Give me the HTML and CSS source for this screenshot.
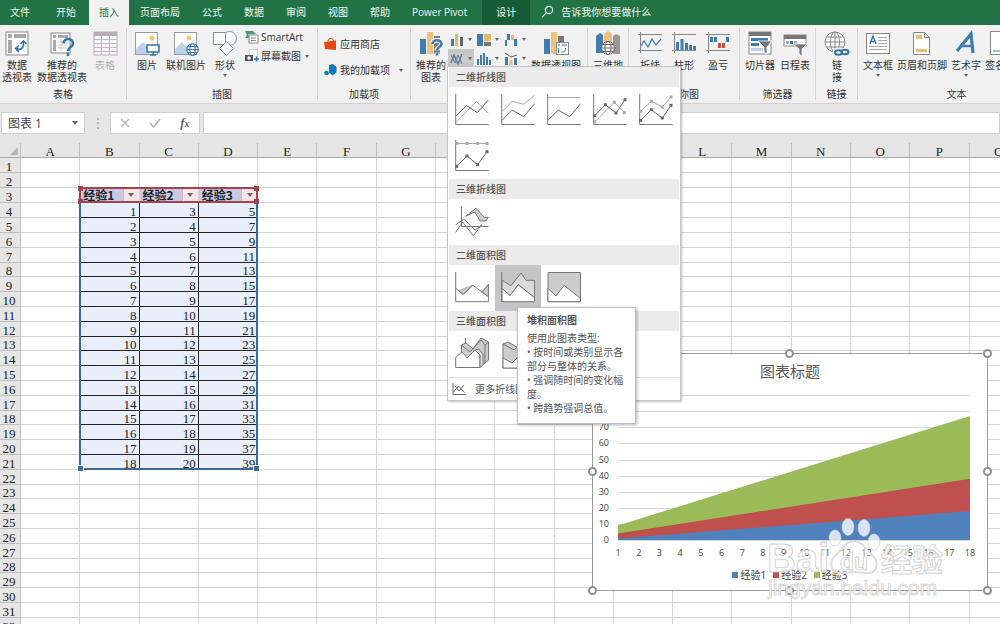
FILE: index.html
```html
<!DOCTYPE html>
<html lang="zh-CN">
<head>
<meta charset="utf-8">
<title>图表工作簿</title>
<link rel="stylesheet" href="styles.css">
</head>
<body>
<nav class="tabs">
  <button class="tab tab-file">文件</button>
  <button class="tab tab-home">开始</button>
  <button class="tab tab-active">插入</button>
  <button class="tab">页面布局</button>
  <button class="tab">公式</button>
  <button class="tab">数据</button>
  <button class="tab">审阅</button>
  <button class="tab">视图</button>
  <button class="tab">帮助</button>
  <button class="tab">Power Pivot</button>
  <button class="tab tab-context">设计</button>
  <button class="tell-me">
    <svg width="14" height="14" viewBox="0 0 14 14" fill="none" stroke="#e4f2e9" stroke-width="1.2"><circle cx="8" cy="5" r="3.6"/><path d="M5.4 7.6L1 12.4"/></svg>
    告诉我你想要做什么
  </button>
</nav>

<div class="ribbon">
  <section class="group g-tables">
    <div class="group-body">
      <button class="big">
        <svg class="ico" viewBox="0 0 26 26"><rect x="2" y="2" width="22" height="23" fill="#fff" stroke="#8a8a8a"/><path d="M4 4h4v4H4zM10 4h12v4H10zM4 10h4v13H4z" fill="#a9a9a9"/><path d="M12.500 18.500C17 21 20 18 19.500 12M16.500 14l3-3.200 3 3.200M15 15.500l-3.500 3 3.500 3.500" fill="none" stroke="#2e75a8" stroke-width="1.600"/></svg>
        <span>数据<br>透视表</span>
      </button>
      <button class="big">
        <svg class="ico" viewBox="0 0 26 26"><rect x="2" y="3" width="19" height="20" fill="#fff" stroke="#8a8a8a"/><path d="M4 5h3v3H4zM9 5h10v3H9zM4 10h3v11H4z" fill="#a9a9a9"/><path d="M9 12h9M9 15h9M9 18h9M12 9v12" stroke="#ccc"/><path d="M14.500 13.500c0-6 9.500-6 9.500 0 0 3.500-5 3.500-5 7.500M19 23v3" fill="none" stroke="#2e75a8" stroke-width="2.600"/></svg>
        <span>推荐的<br>数据透视表</span>
      </button>
      <button class="big" disabled>
        <svg class="ico" viewBox="0 0 26 26"><rect x="2" y="2" width="23" height="23" fill="#fbf6fb" stroke="#b9adb9"/><rect x="2" y="2" width="23" height="4" fill="#b9adb9"/><path d="M2 9.500h23M2 13.500h23M2 17.500h23M2 21.500h23M9.500 6v19M17.500 6v19" stroke="#c5b6c5"/></svg>
        <span>表格</span>
      </button>
    </div>
    <h2>表格</h2>
  </section>

  <section class="group g-pictures">
    <div class="group-body">
      <button class="big">
        <svg class="ico" viewBox="0 0 26 26"><rect x="1.500" y="2.500" width="22" height="22" fill="#fff" stroke="#9a9a9a"/><circle cx="18" cy="8" r="2.500" fill="#eec67c"/><path d="M2 19l7-7 6 7v5H2z" fill="#bfd3e8"/><rect x="13" y="15" width="12" height="7" fill="#fff" stroke="#2e75a8" stroke-width="1.500"/><path d="M16 25h6M19 22v3" stroke="#2e75a8" stroke-width="1.500"/></svg>
        <span>图片</span>
      </button>
      <button class="big">
        <svg class="ico" viewBox="0 0 26 26"><rect x="1.500" y="2.500" width="22" height="22" fill="#fff" stroke="#9a9a9a"/><circle cx="16" cy="8" r="2.500" fill="#eec67c"/><path d="M2 19l7-7 6 7v5H2z" fill="#bfd3e8"/><g fill="#fff" stroke="#3a7aa8" stroke-width="1.100"><circle cx="19.500" cy="19.500" r="5.800"/><ellipse cx="19.500" cy="19.500" rx="2.600" ry="5.800"/><path d="M13.700 19.500h11.600M14.500 16.500h10M14.500 22.500h10" fill="none"/></g></svg>
        <span>联机图片</span>
      </button>
      <button class="big">
        <svg class="ico" viewBox="0 0 26 26" fill="#fff" stroke="#6f97b8"><circle cx="17.500" cy="8.500" r="7"/><rect x="1.500" y="2.500" width="12" height="12"/><path d="M14.500 11.500l7 7-7 7-7-7z"/></svg>
        <span>形状</span><i class="caret"></i>
      </button>
      <div class="stack stack-top">
        <button class="row-btn"><svg width="16" height="14" viewBox="0 0 16 14"><path d="M1 1h8l3 3H4l2 4H1l2-3z" fill="#4f9478"/><rect x="5" y="5" width="9" height="8" fill="#fff" stroke="#888"/><path d="M7 8h5M7 10.500h5" stroke="#888"/></svg>SmartArt</button>
        <button class="row-btn"><svg width="16" height="14" viewBox="0 0 16 14"><rect x="5.500" y=".5" width="8" height="10" fill="#fff" stroke="#ccc"/><rect x="1" y="6" width="8" height="6" fill="#555"/><circle cx="5" cy="9" r="1.800" fill="#fff"/><path d="M10 10h5M12.500 7.500v5" stroke="#2e75a8" stroke-width="1.400"/></svg>屏幕截图<i class="caret"></i></button>
      </div>
    </div>
    <h2>插图</h2>
  </section>

  <section class="group g-addins">
    <div class="group-body">
      <div class="stack stack-wide">
        <button class="row-btn"><svg width="13" height="14" viewBox="0 0 13 14"><path d="M0 5l12-1.500V13L1 12z" fill="#e8450c"/><path d="M4 4.500C4 .5 9 .5 9.500 4" fill="none" stroke="#c8400e"/></svg>应用商店</button>
        <button class="row-btn"><svg width="13" height="14" viewBox="0 0 13 14"><path d="M5 2l4-1 3.500 3v5.500l-4 3-3.500-3z" fill="#0f78bf"/><circle cx="2.500" cy="10" r="2.300" fill="#0f78bf"/></svg>我的加载项<i class="caret caret-far"></i></button>
      </div>
    </div>
    <h2>加载项</h2>
  </section>

  <section class="group g-charts">
    <div class="group-body">
      <button class="big">
        <svg class="ico" viewBox="0 0 26 26"><path d="M2 9h6v15H2z" fill="#3f7cb0"/><path d="M9 2h6v22H9z" fill="#ecc27c"/><path d="M16 6h6v18h-6z" fill="#777"/><path d="M14.500 14c0-5 9-5 9 0 0 3.500-4.500 3-4.500 6.500M19 22.500v3" fill="none" stroke="#f1f1f1" stroke-width="5"/><path d="M14.500 14c0-5 9-5 9 0 0 3.500-4.500 3-4.500 6.500M19 22.500v3" fill="none" stroke="#3f7cb0" stroke-width="2.600"/></svg>
        <span>推荐的<br>图表</span>
      </button>
      <div class="minis">
        <button class="mini" aria-label="柱形图"><svg width="14" height="14" viewBox="0 0 14 14"><path d="M1 6h3v7H1z" fill="#3f7cb0"/><path d="M5 1h3v12H5z" fill="#e6b86e"/><path d="M10 4h3v9h-3z" fill="#666"/></svg><i class="caret"></i></button>
        <button class="mini" aria-label="层次结构图"><svg width="14" height="14" viewBox="0 0 14 14"><path d="M0 1h6v12H0z" fill="#3f7cb0"/><path d="M7 1h7v7H7z" fill="#e6b86e"/><path d="M7 9h7v4H7z" fill="#777"/></svg><i class="caret"></i></button>
        <button class="mini" aria-label="瀑布图"><svg width="14" height="14" viewBox="0 0 14 14"><path d="M1 7h2v6H1zM10 6h3v7h-3z" fill="#3f7cb0"/><path d="M3 1h3v6H3z" fill="#3f7cb0"/><path d="M7 2h3v5H7z" fill="#e6b86e"/></svg><i class="caret"></i></button>
        <div class="menu-anchor">
          <button class="mini mini-on" aria-label="折线图或面积图" aria-expanded="true"><svg width="14" height="14" viewBox="0 0 14 14" fill="none"><path d="M1 11L4 3l4 9 4-10" stroke="#3f7cb0" stroke-width="1.300"/><path d="M1 3l4 8 3-8 4 9" stroke="#777"/></svg><i class="caret"></i></button>
          <div class="menu">
            <h3>二维折线图</h3>
            <div class="tiles" id="line2d"></div>
            <h3>三维折线图</h3>
            <div class="tiles">
              <button class="tile" aria-label="三维折线图"><svg width="34" height="32" viewBox="0 0 34 32" fill="none" stroke="#777"><path d="M6.500 0v20.500h27"/><path d="M10.700 10.300L21 2.300l8.300 9h4L30.700 15h-5.400L19.500 6z" fill="#ccc"/><path d="M.7 18.700L9 13l11 11.300 6.700-5.600-8.400 11L7.700 16l-7 10.300" fill="none"/></svg></button>
            </div>
            <h3>二维面积图</h3>
            <div class="tiles">
              <button class="tile" aria-label="面积图"><svg width="34" height="32" viewBox="0 0 34 32" stroke="#777" fill="none"><path d="M3.700 18.700L10 16.300l7.300-3L8 22z M26.700 20.300l6.600-8v12z" fill="#ccc" stroke="#aaa"/><path d="M.7 0v29.700h33V12.300l-6.700 8M.7 16.300L8 22.500l10-9.200L33.700 25"/></svg></button>
              <button class="tile tile-on" aria-label="堆积面积图"><svg width="34" height="32" viewBox="0 0 34 32" stroke="#777"><path d="M1 8.300l9 5.400L20 1l5 7.300h8.500v17.400L17.300 12.700 9 23.700l-8-7.400z" fill="#dadada"/><path d="M1 16.300l8 7.400 8.300-11 16.200 13v4H1z" fill="#fff"/><path d="M.7 0v30" fill="none"/></svg></button>
              <button class="tile" aria-label="百分比堆积面积图"><svg width="34" height="32" viewBox="0 0 34 32" stroke="#777"><path d="M1 .5h32.500v29.200H1z" fill="#ccc"/><path d="M1 16.300L9 24l8-10.700 16.500 13v3.400H1z" fill="#fff"/></svg></button>
            </div>
            <h3>三维面积图</h3>
            <div class="tiles">
              <button class="tile" aria-label="三维面积图"><svg width="34" height="32" viewBox="0 0 34 32" stroke="#777"><path d="M10.500 0v8" fill="none"/><path d="M6.500 7L11 5l7 6L26 0l7.500 4v18l-6 5H6.500z" fill="#ccc"/><path d="M6.500 7l8.500 7L26 2l4 5v19M30 7l3.500-3" fill="none"/><path d="M.7 19.300L7 14l5 6 8-8 5 5v12.500H.7z" fill="#fff"/><path d="M20 12l3.500-1 4.500 5v11l-3 2.500V17z" fill="#ddd"/></svg></button>
              <button class="tile" aria-label="三维堆积面积图"><svg width="34" height="32" viewBox="0 0 34 32" stroke="#777"><path d="M2 6l5-2 9 5 8-8 9 7v18l-5 4H2z" fill="#ccc"/><path d="M2 20l9 5 8-8 9 9v4H2z" fill="#fff"/><path d="M2 6l11 6 10-9 5 7v19" fill="none"/></svg></button>
            </div>
            <button class="more"><svg width="14" height="12" viewBox="0 0 14 12" fill="none" stroke="#666"><path d="M1 0v11.500h13M1.500 9l5-6 6 6.500M3 3l4 5 5-6"/></svg>更多折线图(M)...</button>
            <div class="tip" role="tooltip">
              <strong>堆积面积图</strong>
              <p>使用此图表类型:<br>• 按时间或类别显示各<br>部分与整体的关系。<br>• 强调随时间的变化幅<br>度。<br>• 跨趋势强调总值。</p>
            </div>
          </div>
        </div>
        <button class="mini" aria-label="统计图"><svg width="14" height="14" viewBox="0 0 14 14"><path d="M0 7h2v6H0zM3 3h2v10H3zM6 1h2v12H6zM9 5h2v8H9zM12 8h2v5h-2z" fill="#3f7cb0"/></svg><i class="caret"></i></button>
        <button class="mini" aria-label="组合图"><svg width="14" height="14" viewBox="0 0 14 14"><path d="M1 5h3v8H1z" fill="#3f7cb0"/><path d="M5.500 8h3v5h-3z" fill="#e6b86e"/><path d="M10 6h3v7h-3z" fill="#3f7cb0"/><path d="M1 1l6 4 6-2" stroke="#666" fill="none"/></svg><i class="caret"></i></button>
      </div>
      <button class="big">
        <svg class="ico" viewBox="0 0 26 26"><path d="M1 9h6v15H1z" fill="#3f7cb0"/><path d="M8 2h6v22H8z" fill="#ecc27c"/><path d="M15 6h6v10h-6z" fill="#777"/><rect x="13.500" y="12.500" width="12" height="12" fill="#fff" stroke="#888"/><path d="M15 15h2M19 15h5M15.500 18v5M18.500 22c3 0 4-1 4-4" stroke="#2e75a8" fill="none"/></svg>
        <span>数据透视图</span>
      </button>
    </div>
    <h2>图表</h2>
  </section>

  <section class="group g-map">
    <div class="group-body">
      <button class="big">
        <svg class="ico" viewBox="0 0 26 26"><path d="M1 6l4-3 3 2v18H1z" fill="#3f7cb0"/><path d="M9 4l4-3 4 3v19H9z" fill="#ecc27c"/><path d="M18 6l3-2 4 2v18h-7z" fill="#999"/><g fill="#fff" stroke="#666"><circle cx="13" cy="18" r="6.500"/><ellipse cx="13" cy="18" rx="3" ry="6.500"/><path d="M6.500 18h13M8 14.500h10M8 21.500h10" fill="none"/></g></svg>
        <span>三维地<br>图</span>
      </button>
    </div>
    <h2>演示</h2>
  </section>

  <section class="group g-spark">
    <div class="group-body">
      <button class="big"><svg class="ico" viewBox="0 0 26 26" fill="none"><path d="M3.500 2v21M1 4.500h24M1 20.500h24" stroke="#888"/><path d="M4 16l3-5 4 6 4-8 4 6 5-6" stroke="#3f7cb0" stroke-width="1.300"/></svg><span>折线</span></button>
      <button class="big"><svg class="ico" viewBox="0 0 26 26"><path d="M3.500 2v21M1 4.500h24M1 20.500h24" stroke="#888"/><path d="M5 12h3v8H5zM9.500 9h3v11h-3zM14 13h3v7h-3zM18 15h3v5h-3zM22 16h3v4h-3z" fill="#3f7cb0"/></svg><span>柱形</span></button>
      <button class="big"><svg class="ico" viewBox="0 0 26 26"><path d="M3.500 2v21M1 4.500h24M1 20.500h24" stroke="#888"/><path d="M5 7h3v5H5zM9 7h3v5H9zM21 7h3v5h-3z" fill="#3f7cb0"/><path d="M13 13h3v5h-3zM17 13h3v5h-3z" fill="#c8503c"/></svg><span>盈亏</span></button>
    </div>
    <h2>迷你图</h2>
  </section>

  <section class="group g-filter">
    <div class="group-body">
      <button class="big"><svg class="ico" viewBox="0 0 26 26"><rect x="2" y="2" width="22" height="22" fill="#fff" stroke="#888"/><path d="M2 2h22v4H2z" fill="#777"/><path d="M4 8h17v3H4zM4 13h8v3H4z" fill="#3f7cb0"/><path d="M4 18h12v3H4z" fill="#bfd3e8"/><path d="M11 11h14l-5 6v7l-3-2v-5z" fill="#777" stroke="#fff" stroke-width=".8"/></svg><span>切片器</span></button>
      <button class="big"><svg class="ico" viewBox="0 0 26 26"><rect x="2" y="5" width="22" height="11" fill="#fff" stroke="#888"/><path d="M2 5h22v4H2z" fill="#777"/><path d="M4 11h3v3H4zM12 11h3v3h-3z" fill="#aaa"/><path d="M8 11h3v3H8z" fill="#3f7cb0"/><path d="M11 14h14l-5 5v7l-3-2v-5z" fill="#777" stroke="#fff" stroke-width=".8"/></svg><span>日程表</span></button>
    </div>
    <h2>筛选器</h2>
  </section>

  <section class="group g-link">
    <div class="group-body">
      <button class="big"><svg class="ico" viewBox="0 0 26 26" fill="none"><g stroke="#888" fill="#fff"><circle cx="11" cy="12" r="10"/><ellipse cx="11" cy="12" rx="4.500" ry="10"/><path d="M1 12h20M2.500 7h17M2.500 17h17M11 2v20" fill="none"/></g><g stroke="#f1f1f1" stroke-width="5"><ellipse cx="15" cy="22" rx="3.500" ry="2"/><ellipse cx="21" cy="22" rx="3.500" ry="2"/></g><g stroke="#2e75a8" stroke-width="2"><ellipse cx="14.500" cy="22.500" rx="3.500" ry="2.300"/><ellipse cx="21" cy="22" rx="3.500" ry="2.300"/></g></svg><span>链<br>接</span></button>
    </div>
    <h2>链接</h2>
  </section>

  <section class="group g-text">
    <div class="group-body">
      <button class="big"><svg class="ico" viewBox="0 0 26 26"><rect x="1.500" y="3.500" width="23" height="20" fill="#fff" stroke="#888"/><path d="M5 14l3-8 3 8M6 11.500h4" fill="none" stroke="#2e75a8" stroke-width="1.400"/><path d="M13 7.500h9M13 10.500h9M13 13.500h9M4 16.500h18M4 19.500h18" stroke="#aaa"/></svg><span>文本框</span><i class="caret"></i></button>
      <button class="big"><svg class="ico" viewBox="0 0 26 26"><path d="M4.500 2.500h11l5 5v17h-16z" fill="#fff" stroke="#888"/><path d="M15.500 2.500v5h5" fill="none" stroke="#888"/><path d="M7 5h6v4H7zM7 19h11v3H7z" fill="#e6bd72"/></svg><span>页眉和页脚</span></button>
      <button class="big"><svg class="ico" viewBox="0 0 26 26" fill="none" stroke="#3f7cb0"><path d="M4 21L18 4l2 19" stroke-width="3.200"/><path d="M9 16h10" stroke-width="2.400"/></svg><span>艺术字</span><i class="caret"></i></button>
      <button class="big"><svg class="ico" viewBox="0 0 26 26"><rect x="3.500" y="1.500" width="20" height="23" fill="#fff" stroke="#888"/><path d="M6 21h15" stroke="#3f7cb0"/></svg><span>签名行</span></button>
    </div>
    <h2>文本</h2>
  </section>
</div>

<div class="formula-bar">
  <div class="name-box"><input aria-label="名称框" value="图表 1"><i class="caret"></i></div>
  <span class="dots">⋮</span>
  <div class="fx-box">
    <button aria-label="取消"><svg width="10" height="10" viewBox="0 0 10 10"><path d="M1 1l8 8M9 1L1 9" stroke="#b8b8b8" stroke-width="1.400"/></svg></button>
    <button aria-label="输入"><svg width="12" height="10" viewBox="0 0 12 10" fill="none"><path d="M1 5l3.500 4L11 1" stroke="#b8b8b8" stroke-width="1.800"/></svg></button>
    <button class="fx" aria-label="插入函数">f<small>x</small></button>
  </div>
  <input class="formula" aria-label="编辑栏">
</div>

<main class="sheet">
  <table class="grid" id="grid"></table>
  <div class="chart">
    <h4>图表标题</h4>
    <svg class="plot" id="plot" viewBox="0 0 394 176" role="img" aria-label="堆积面积图"></svg>
    <ul class="legend">
      <li><i class="key key-1"></i>经验1</li><li><i class="key key-2"></i>经验2</li><li><i class="key key-3"></i>经验3</li>
    </ul>
    <i class="knob k-tl"></i><i class="knob k-t"></i><i class="knob k-tr"></i><i class="knob k-l"></i><i class="knob k-r"></i><i class="knob k-bl"></i><i class="knob k-b"></i><i class="knob k-br"></i>
  </div>
  <svg class="watermark" width="184" height="90" viewBox="0 0 184 90">
    <g class="wm-paw"><ellipse cx="69" cy="21" rx="6" ry="8"/><ellipse cx="82" cy="10" rx="6" ry="8.500"/><ellipse cx="98" cy="11" rx="6" ry="8.500"/><ellipse cx="108" cy="25" rx="6" ry="8"/></g>
    <path class="wm-line" d="M88 24c-8 0-12 9-18 14-9 8-4 20 7 18 8-1 14-1 22 0 11 2 16-10 7-18-6-5-10-14-18-14z"/>
    <g class="wm-text"><text x="1" y="55" font-size="40">Bai</text><text x="74" y="53" font-size="23">du</text><text x="115" y="54" font-size="31">经验</text></g>
    <text class="wm-url" x="2" y="78" font-size="21">jingyan.baidu.com</text>
  </svg>
</main>
<script src="app.js"></script>
</body>
</html>
```
FILE: styles.css
```css
* { box-sizing: border-box; }
body {
  margin: 0;
  height: 100vh;
  overflow: hidden;
  display: flex;
  flex-direction: column;
  background: #e6e6e6;
  color: #333;
  font: 10px/12px "Open Sans", "Noto Sans CJK SC", sans-serif;
}
button, input { font: inherit; color: inherit; border: 0; padding: 0; background: none; }
h2, h3, h4, p, ul { margin: 0; padding: 0; font-weight: 400; }
svg { display: block; flex: none; }

.caret {
  display: block;
  flex: none;
  width: 0;
  height: 0;
  border: 2px solid transparent;
  border-top: 3px solid #666;
  border-bottom: 0;
}

/* Tabs */
.tabs { display: flex; flex: none; height: 25px; background: #217346; color: #f0f7f2; white-space: nowrap; }
.tab { padding: 0 11px 2px; }
.tab-file { padding: 0 12px 2px 10px; }
.tab-home { margin: 0 2px 0 3px; }
.tab-active { padding: 0 10px 2px; background: #f1f1f1; color: #217346; }
.tab-context { margin-left: 4px; padding: 0 14px 2px; background: #185c37; }
.tell-me { display: flex; align-items: center; gap: 6px; padding: 0 11px 2px; }

/* Ribbon */
.ribbon { display: flex; flex: none; padding: 3px 0; background: #f1f1f1; border-bottom: 1px solid #d2d2d2; }
.group { display: flex; flex-direction: column; flex: none; height: 72px; border-right: 1px solid #d6d6d6; }
.group-body { display: flex; flex: 1; align-items: flex-start; padding-top: 2px; }
.group h2 { font-size: 10px; line-height: 12px; text-align: center; }
.big { display: flex; flex-direction: column; align-items: center; gap: 3px; white-space: nowrap; line-height: 12px; min-width: 24px; }
.big:disabled { color: #b4b4b4; }
.ico { width: 26px; height: 26px; }
.stack { display: flex; flex-direction: column; }
.stack-top { gap: 5px; }
.stack-wide { gap: 12px; padding-top: 7px; }
.row-btn { display: flex; align-items: center; gap: 1px; height: 14px; white-space: nowrap; }
.row-btn .caret { margin-left: 3px; }
.row-btn .caret-far { margin-left: 6px; }
.stack-wide .row-btn { gap: 3px; }
.g-tables .group-body { padding-left: 2px; padding-right: 8px; gap: 5px; }
.g-pictures .group-body { padding-left: 7px; padding-right: 8px; gap: 6px; }
.g-addins .group-body { padding-left: 6px; padding-right: 7px; }
.g-charts .group-body { padding-left: 5px; padding-right: 6px; gap: 2px; }
.g-map .group-body { padding-left: 5px; padding-right: 5px; }
.g-spark .group-body { padding-left: 8px; padding-right: 8px; gap: 8px; }
.g-filter .group-body { padding-left: 5px; padding-right: 5px; gap: 5px; }
.g-link .group-body { padding-left: 8px; padding-right: 7px; }
.g-text .group-body { padding-left: 5px; padding-right: 40px; gap: 4px; }

.minis { display: grid; grid-template-columns: repeat(3, 27px); grid-auto-rows: 19px; }
.mini { display: flex; align-items: center; gap: 4px; width: 26px; height: 19px; padding-left: 2px; }
.mini-on { background: #c8c8c8; }
.menu-anchor { position: relative; }

/* Drop-down gallery */
.menu {
  position: absolute;
  z-index: 5;
  top: 17px;
  left: -1px;
  width: 234px;
  padding: 0 1px;
  background: #fff;
  border: 1px solid #c6c6c6;
  box-shadow: 1px 1px 2px rgba(0, 0, 0, .25);
}
.menu h3 { height: 20px; padding-left: 7px; background: #ebebeb; color: #555; font-size: 10px; font-weight: 500; line-height: 20px; }
.tiles { display: flex; flex-wrap: wrap; }
.tile { display: flex; align-items: center; justify-content: center; width: 46px; height: 46px; }
.tile-on { background: #c5c5c5; }
.more { display: flex; align-items: center; gap: 9px; width: 100%; height: 23px; padding-left: 3px; border-top: 1px solid #e1e1e1; color: #555; }

.tip {
  position: absolute;
  top: 240px;
  left: 69px;
  width: 119px;
  padding: 5px 9px 8px;
  background: #fff;
  border: 1px solid #c0c0c0;
  box-shadow: 1px 1px 3px rgba(0, 0, 0, .3);
  color: #555;
  line-height: 14px;
  white-space: nowrap;
}
.tip strong { display: block; margin-bottom: 4px; }

/* Formula bar */
.formula-bar { display: flex; flex: none; padding: 8px 0 9px 1px; height: 39px; }
.name-box { display: flex; align-items: center; width: 84px; padding: 0 6px; background: #fff; border: 1px solid #d0d0d0; font-size: 12px; color: #444; }
.name-box input { flex: 1; min-width: 0; }
.name-box .caret { border-width: 4px 3px 0; }
.dots { width: 25px; text-align: center; line-height: 22px; font-size: 12px; color: #999; }
.fx-box { display: flex; align-items: center; justify-content: space-around; width: 90px; background: #fff; border: 1px solid #d0d0d0; }
.fx { font: italic 700 13px/16px "Liberation Serif", serif; color: #666; }
.fx small { font-size: 10px; }
.formula { flex: 1; min-width: 0; margin-left: 3px; background: #fff; border: 1px solid #d0d0d0; }

/* Worksheet */
.sheet { position: relative; flex: 1; min-height: 0; overflow: hidden; }
.grid {
  width: calc(100% + 29px);
  height: calc(100% + 9px);
  table-layout: fixed;
  border-collapse: separate;
  border-spacing: 0;
  background: #fff;
  color: #222;
  font: 13px/11px "Liberation Serif", "Noto Sans CJK SC", serif;
}
.grid th, .grid td { height: 14px; padding: 2px 2px 0; border: solid #d6d6d6; border-width: 0 1px 1px 0; font-weight: 400; vertical-align: bottom; white-space: nowrap; }
.grid td { position: relative; text-align: right; }
.grid thead th { height: 15px; background: #e6e6e6; border-color: #c0c0c0; border-bottom-color: #ababab; }
.grid tbody th { background: #e6e6e6; border-color: #bdbdbd; padding-right: 4px; }
.grid .corner { width: 21px; padding: 0 2px 2px 0; }
.corner i { display: block; margin-left: auto; width: 0; border: 4px solid #b4b4b4; border-top-color: transparent; border-left-color: transparent; }
.grid .num { background: #e9effa; border-bottom-color: #222; }
.grid .num-line { border-right-color: #222; }
.grid .head { background: #c9c9e3; padding: 0 0 0 3px; text-align: left; font: 700 12px/14px "Noto Sans CJK SC", sans-serif; }
.head-in { display: flex; height: 14px; }
.head-in button { display: flex; align-items: center; justify-content: center; width: 16px; margin-left: auto; background: #f8e3e6; border-left: 1px solid #c9b9c9; }
.head-in .caret { border-width: 4px 3px 0; }
.grid .range-cell { z-index: 1; }
.range { position: absolute; top: -1px; left: -1px; width: calc(300% + 4px); border: 2px solid; color: #3c6a96; pointer-events: none; }
.range-head { height: calc(100% + 2px); color: #a4434f; }
.range-data { top: 0; height: calc(1800% + 18px); border-top: 0; }
.dot { position: absolute; width: 5px; height: 5px; background: currentColor; }
.range-data .dot { outline: 1px solid #fff; }
.range-data .d-tl, .range-data .d-tr { display: none; }
.d-tl { top: -3px; left: -3px; }
.d-tr { top: -3px; right: -3px; }
.d-bl { bottom: -3px; left: -3px; }
.d-br { bottom: -3px; right: -3px; }

/* Floating chart */
.chart { position: absolute; z-index: 2; top: 210px; left: 592px; width: 396px; height: 238px; background: #fff; border: 1px solid #999; }
.chart h4 { height: 35px; font-size: 15px; line-height: 34px; text-align: center; color: #595959; }
.plot { width: 100%; height: 176px; font-size: 9px; fill: #444; }
.legend { display: flex; justify-content: center; gap: 7px; padding-top: 3px; list-style: none; line-height: 14px; color: #444; }
.legend li { display: flex; align-items: center; gap: 2px; }
.key { width: 6px; height: 6px; }
.key-1 { background: #4f81bd; }
.key-2 { background: #c0504d; }
.key-3 { background: #9bbb59; }
.knob { position: absolute; width: 9px; height: 9px; margin: -5px; background: #fff; border: 2px solid #909090; border-radius: 50%; }
.k-tl, .k-t, .k-tr { top: 0; }
.k-l, .k-r { top: 50%; }
.k-bl, .k-b, .k-br { bottom: 0; }
.k-tl, .k-l, .k-bl { left: 0; }
.k-t, .k-b { left: 50%; }
.k-tr, .k-r, .k-br { right: 0; }

.watermark { position: absolute; z-index: 3; top: 374px; left: 766px; pointer-events: none; font-family: "Liberation Sans", "Noto Sans CJK SC", sans-serif; }
.wm-paw { fill: #fff; fill-opacity: .78; stroke: #ccc; stroke-opacity: .6; }
.wm-line { fill: #fff; fill-opacity: .3; stroke: #dcdcdc; stroke-width: 2; }
.wm-text { fill: #fff; fill-opacity: .7; stroke: #c8c8c8; stroke-opacity: .8; font-weight: 700; }
.wm-url { fill: #fff; fill-opacity: .75; stroke: #c8c8c8; stroke-opacity: .7; }
```
FILE: app.js
```js
// Worksheet
const letters = 'ABCDEFGHIJKLMNOPQ'.split('');
const dots = '<i class="dot d-tl"></i><i class="dot d-tr"></i><i class="dot d-bl"></i><i class="dot d-br"></i>';
let html = '<thead><tr><th class="corner"><i></i></th>' + letters.map(l => `<th scope="col">${l}</th>`).join('') + '</tr></thead><tbody>';
for (let r = 1; r <= 32; r++) {
  html += `<tr><th scope="row">${r}</th>`;
  letters.forEach((l, c) => {
    const inCols = c >= 1 && c <= 3;
    if (inCols && r === 3) {
      const range = c === 1 ? `<div class="range range-head">${dots}</div>` : '';
      html += `<td class="head${c === 1 ? ' range-cell' : ''}"><div class="head-in">经验${c}<button aria-label="筛选经验${c}"><i class="caret"></i></button></div>${range}</td>`;
    } else if (inCols && r >= 4 && r <= 21) {
      const i = r - 3;
      const value = [i, i + 2, 2 * i + 3][c - 1];
      const first = c === 1 && r === 4;
      const range = first ? `<div class="range range-data">${dots}</div>` : '';
      html += `<td class="num${c < 3 ? ' num-line' : ''}${first ? ' range-cell' : ''}">${value}${range}</td>`;
    } else {
      html += '<td></td>';
    }
  });
  html += '</tr>';
}
document.getElementById('grid').innerHTML = html + '</tbody>';

// Stacked area chart
const x = i => 25 + (i - 1) * 352 / 17;
const y = v => 151 - v * 1.61;
let plot = '';
for (let v = 0; v <= 90; v += 10) {
  plot += `<path d="M25 ${Math.round(y(v)) + 0.5}H377" stroke="#d9d9d9"/>`;
  plot += `<text x="16" y="${y(v) + 3}" text-anchor="end">${v}</text>`;
}
[['#9bbb59', i => 4 * i + 5], ['#c0504d', i => 2 * i + 2], ['#4f81bd', i => i]].forEach(([color, f]) => {
  plot += `<path d="M${x(1)} ${y(0)}L${x(1)} ${y(f(1))}L${x(18)} ${y(f(18))}V${y(0)}Z" fill="${color}"/>`;
});
for (let i = 1; i <= 18; i++) plot += `<text x="${x(i)}" y="167" text-anchor="middle">${i}</text>`;
document.getElementById('plot').innerHTML = plot;

// Line chart gallery: each series is [points, colour]
const DARK = '#666', LIGHT = '#aaa';
const stackLow = [[1, 26.3], [11.3, 16], [22.7, 22.7], [33.5, 9.7]];
const kinds = [
  ['折线图', false, [[[[1, 28.3], [21.3, 7.3], [33.3, 19.3]], LIGHT], [[[1, 22], [11.7, 11.7], [22.3, 18.7], [33.3, 6]], DARK]]],
  ['堆积折线图', false, [[[[1, 17.7], [11.3, 7.3], [22.7, 10.3], [33.5, 1.3]], LIGHT], [stackLow, DARK]]],
  ['百分比堆积折线图', false, [[[[1, 3.5], [33.5, 3.5]], LIGHT], [stackLow, DARK]]],
  ['带数据标记的折线图', true, [[[[1.7, 28], [21.3, 8.3], [31.3, 18.7]], LIGHT], [[[1.7, 21.7], [12.3, 10.7], [23, 19], [32, 5.7]], DARK]]],
  ['带标记的堆积折线图', true, [[[[1.7, 17.3], [12.3, 7.3], [23.3, 13], [32, 3]], LIGHT], [[[1.7, 26.3], [12.3, 15.7], [23.3, 24], [32, 11.3]], DARK]]],
  ['带数据标记的百分比堆积折线图', true, [[[[1.7, 3.5], [12, 3.5], [22.7, 3.5], [32, 3.5]], LIGHT], [[[1.7, 26.3], [12, 16], [22.7, 24.7], [32, 11.7]], DARK]]]
];
document.getElementById('line2d').innerHTML = kinds.map(([name, marks, series]) => {
  let art = '<path d="M.7 0v30.500h33" stroke="#777" fill="none"/>';
  series.forEach(([pts, color]) => {
    art += `<polyline points="${pts.join(' ')}" fill="none" stroke="${color}"/>`;
    if (marks) pts.forEach(p => { art += `<rect x="${p[0] - 1.5}" y="${p[1] - 1.5}" width="3" height="3" fill="${color}"/>`; });
  });
  return `<button class="tile" aria-label="${name}"><svg width="34" height="32" viewBox="0 0 34 32">${art}</svg></button>`;
}).join('');
```
